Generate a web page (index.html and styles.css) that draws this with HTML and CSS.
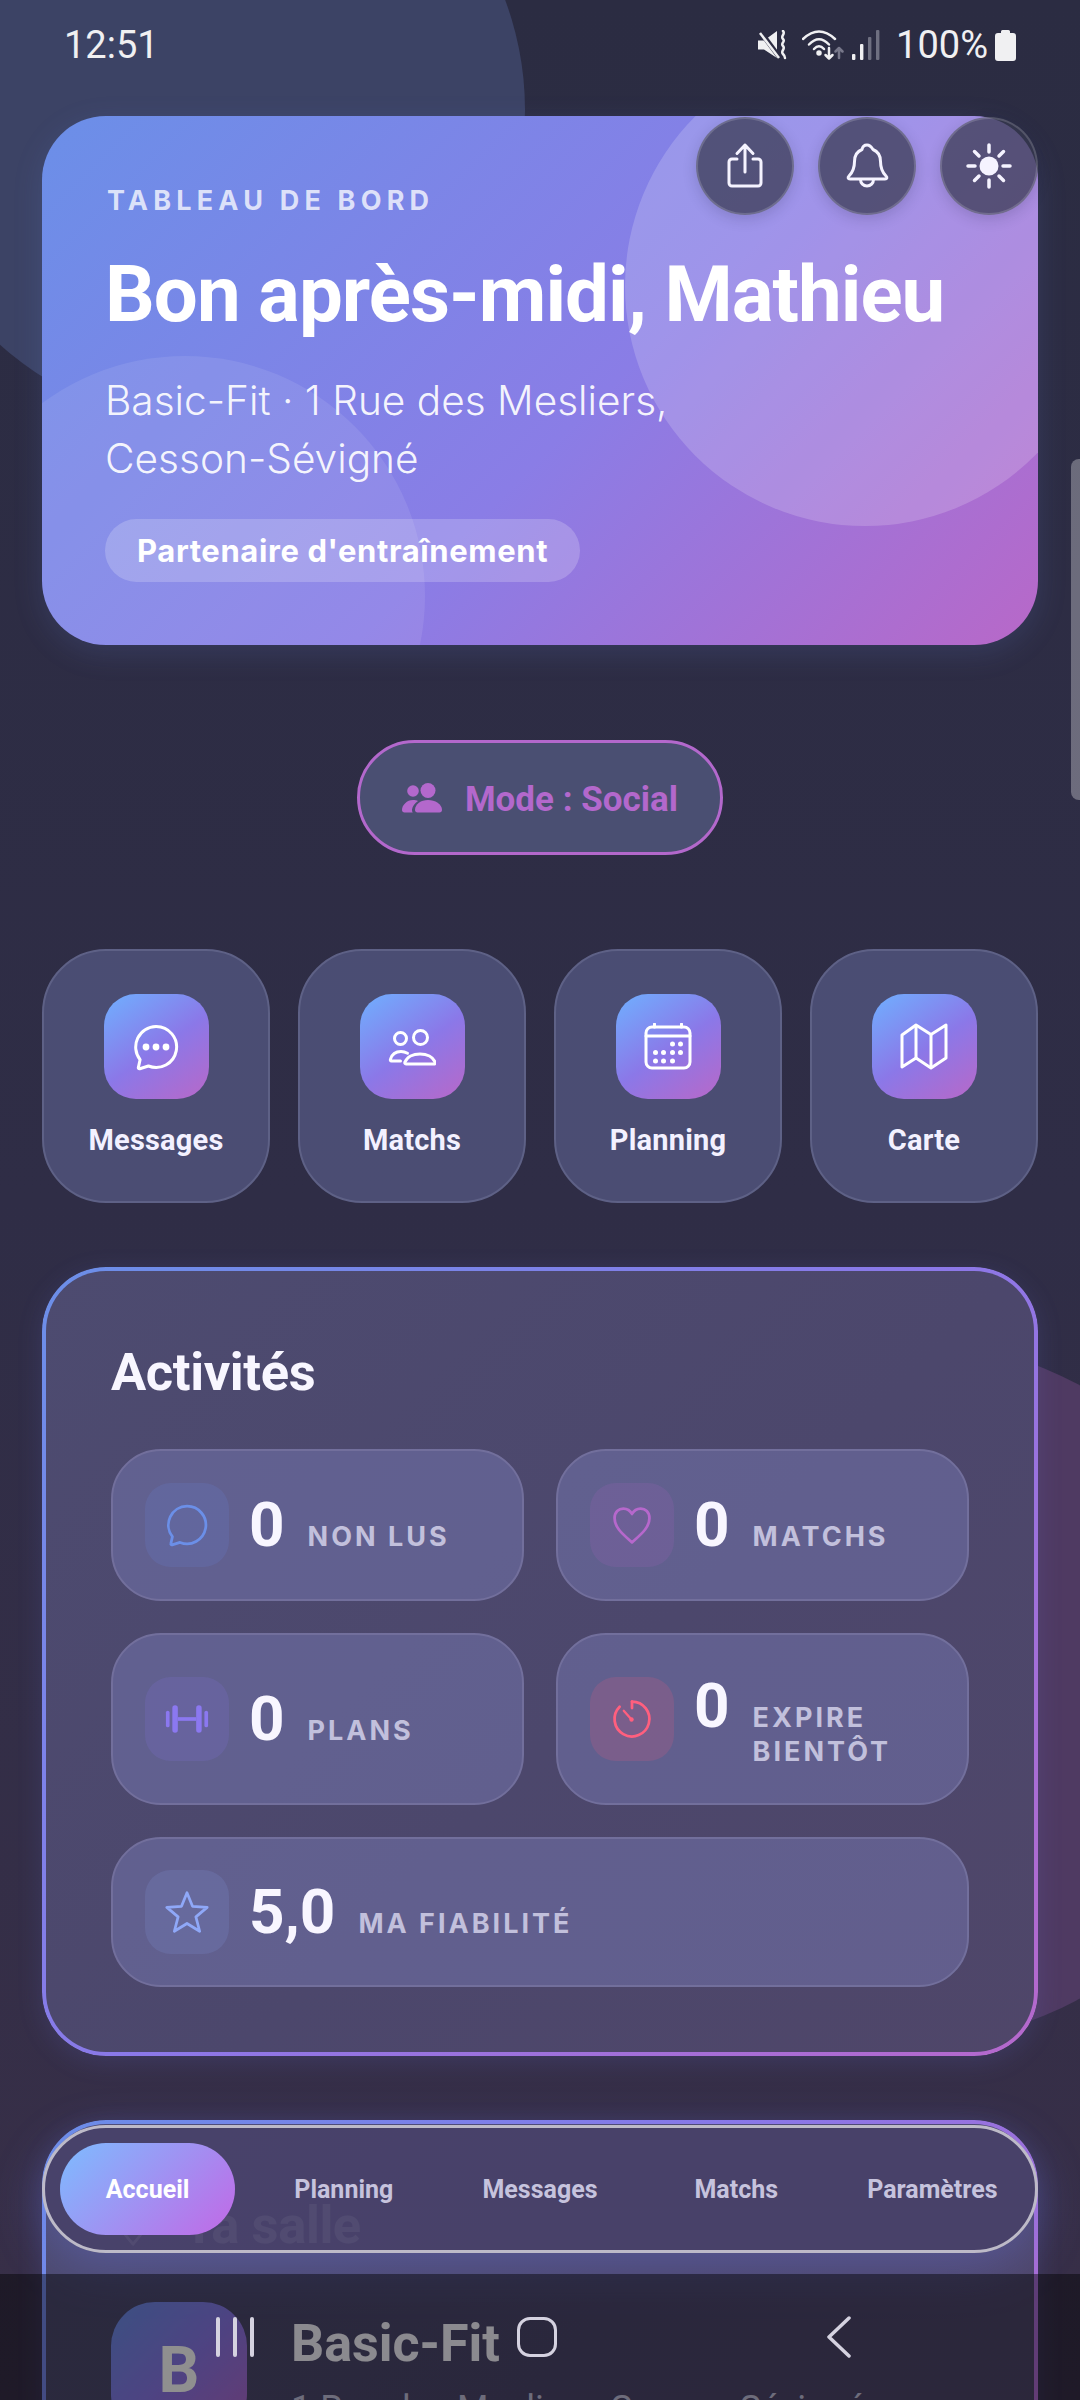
FILE: index.html
```html
<!DOCTYPE html>
<html lang="fr">
<head>
  <meta charset="utf-8">
  <title>Tableau de bord</title>
  <link rel="stylesheet" href="styles.css">
</head>
<body>
  <div class="screen">
    <div class="blob blob-top"></div>
    <div class="blob blob-bottom"></div>

    <div class="page">
      <div class="status">
        <span class="time">12:51</span>
        <div class="status-right">
          <svg class="ic-mute" viewBox="0 0 30 30"><path d="M0 10.500h6L19 1v27L6 19.500H0z" fill="#f0f0f2"/><path d="M2 1l20 27" stroke="#2c2c42" stroke-width="5"/><path d="M2 3l19 25" stroke="#f0f0f2" stroke-width="2.500"/><path d="M25 1c3 3-3 5 0 8s-3 4 0 7-3 5 0 8c1 1 2 3 2 4" fill="none" stroke="#f0f0f2" stroke-width="2.500" stroke-linecap="round"/></svg>
          <svg class="ic-wifi" viewBox="0 0 42 32" fill="none" stroke="#f0f0f2" stroke-width="2.500" stroke-linecap="round" stroke-linejoin="round"><path d="M1 10Q17-5 33 10"/><path d="M7 15.500Q17 5 27 15.500"/><path d="M12 20Q17 14.500 22 20"/><circle cx="17" cy="24" r="1.500" fill="#f0f0f2"/><path d="M27 19v10M23.500 26l3.500 3.500 3.500-3.500"/><path d="M37 29V19M33.500 22.500l3.500-3.500 3.500 3.500" stroke="#77778a"/></svg>
          <svg class="ic-signal" viewBox="0 0 28 30"><rect x="0" y="24" width="3.400" height="6" rx="1" fill="#f0f0f2"/><rect x="8" y="14" width="3.400" height="16" rx="1" fill="#f0f0f2"/><rect x="16" y="7" width="3.400" height="23" rx="1" fill="#6e6f80"/><rect x="24" y="0" width="3.400" height="30" rx="1" fill="#6e6f80"/></svg>
          <span class="percent">100%</span>
          <svg class="ic-battery" viewBox="0 0 21 32"><path d="M6 2.500a1.500 1.500 0 0 1 1.500-1.500h6a1.500 1.500 0 0 1 1.500 1.500V4h3a3 3 0 0 1 3 3v22a3 3 0 0 1-3 3H3a3 3 0 0 1-3-3V7a3 3 0 0 1 3-3h3z" fill="#f0f0f2"/></svg>
        </div>
      </div>

      <section class="hero">
        <div class="hero-bg"><span class="hero-circle circle-a"></span><span class="hero-circle circle-b"></span></div>
        <div class="hero-actions">
          <button class="round-btn">
            <svg viewBox="0 0 48 48" fill="none" stroke="#f5f3ff" stroke-width="3" stroke-linecap="round" stroke-linejoin="round"><path d="M24 30V3M16 11.500L24 3l8 8.500"/><path d="M16 17h-5a3 3 0 0 0-3 3v21a3 3 0 0 0 3 3h26a3 3 0 0 0 3-3V20a3 3 0 0 0-3-3h-5"/></svg>
          </button>
          <button class="round-btn">
            <svg viewBox="0 0 48 48" fill="none" stroke="#f5f3ff" stroke-width="3" stroke-linecap="round" stroke-linejoin="round"><path d="M24 3c-3 0-4.500 2-5 4.500-5 2-7.500 6.500-7.500 12 0 7-2 11-5.500 14.500-1.500 1.500-1 3 1 3h35c2 0 2.500-1.500 1-3-3.500-3.500-5.500-7.500-5.500-14.500 0-5.500-2.500-10-7.500-12C28.500 5 27 3 24 3z"/><path d="M17.500 37.500a6.500 6.500 0 0 0 13 0"/></svg>
          </button>
          <button class="round-btn">
            <svg viewBox="0 0 48 48" fill="none" stroke="#f5f3ff" stroke-width="3.500" stroke-linecap="round"><circle cx="24" cy="24" r="9.500" fill="#f5f3ff" stroke="none"/><path d="M24 3v7M24 38v7M3 24h7M38 24h7M9.500 9.500l4.500 4.500M34 34l4.500 4.500M9.500 38.500L14 34M34 14l4.500-4.500"/></svg>
          </button>
        </div>
        <p class="eyebrow">TABLEAU DE BORD</p>
        <h1>Bon après-midi, Mathieu</h1>
        <p class="hero-sub">Basic-Fit · 1 Rue des Mesliers,<br>Cesson-Sévigné</p>
        <span class="hero-pill">Partenaire d'entraînement</span>
      </section>

      <div class="mode-wrap">
        <div class="mode-pill">
          <svg viewBox="0 0 40 30" fill="#b368cc"><circle cx="26" cy="7.500" r="7.500"/><path d="M13 27c0-6 6-10 13-10s14 4 14 10c0 1.500-1 2.500-2.500 2.500h-22C14 29.500 13 28.500 13 27z"/><circle cx="11" cy="8" r="5.800"/><path d="M0 27c0-5 5-10 11-10 2 0 3.500.4 5 1-3 2-5.500 5-6 8.500 0 1.500.2 2.200.8 3H2.500C1 29.500 0 28.500 0 27z"/></svg>
          <span class="mode-text">Mode : Social</span>
        </div>
      </div>

      <div class="shortcuts">
        <a class="shortcut">
          <span class="shortcut-icon">
            <svg viewBox="0 0 48 48" fill="none" stroke="#fff" stroke-width="3" stroke-linejoin="round"><path d="M24 3.500a20.500 20.500 0 1 1-7.600 39.500l-8.600 2.700c-1 .3-1.700-.5-1.400-1.400l1.700-7.600A20.500 20.500 0 0 1 24 3.500z"/><circle cx="14" cy="24" r="3.400" fill="#fff" stroke="none"/><circle cx="24" cy="24" r="3.400" fill="#fff" stroke="none"/><circle cx="34" cy="24" r="3.400" fill="#fff" stroke="none"/></svg>
          </span>
          <span class="shortcut-label">Messages</span>
        </a>
        <a class="shortcut">
          <span class="shortcut-icon">
            <svg viewBox="0 0 48 48" fill="none" stroke="#fff" stroke-width="3" stroke-linejoin="round" stroke-linecap="round"><circle cx="32.500" cy="14.500" r="7"/><path d="M18 41h28c1 0 1.500-1 1-2-2-5-8-8-15-8s-13 3-15 8c-.5 1 0 2 1 2z"/><circle cx="12.500" cy="15.500" r="6"/><path d="M12.500 38H3.500c-1 0-1.500-.8-1-1.800C4 31 8 28.500 13 28.500c2.500 0 4.500.6 6.500 1.700"/></svg>
          </span>
          <span class="shortcut-label">Matchs</span>
        </a>
        <a class="shortcut">
          <span class="shortcut-icon">
            <svg viewBox="0 0 48 48" fill="none" stroke="#fff" stroke-width="3" stroke-linecap="round"><rect x="2" y="4" width="44" height="41" rx="6"/><path d="M2 13h44M10.500 1v3M37.500 1v3"/><g fill="#fff" stroke="none"><circle cx="28.500" cy="21" r="2.500"/><circle cx="36.500" cy="21" r="2.500"/><circle cx="11.500" cy="29.500" r="2.500"/><circle cx="19.500" cy="29.500" r="2.500"/><circle cx="28.500" cy="29.500" r="2.500"/><circle cx="36.500" cy="29.500" r="2.500"/><circle cx="11.500" cy="38" r="2.500"/><circle cx="19.500" cy="38" r="2.500"/><circle cx="28.500" cy="38" r="2.500"/></g></svg>
          </span>
          <span class="shortcut-label">Planning</span>
        </a>
        <a class="shortcut">
          <span class="shortcut-icon">
            <svg viewBox="0 0 48 48" fill="none" stroke="#fff" stroke-width="3" stroke-linejoin="round"><path d="M2 12L16 2l15 9.500L46 2v33L31 45 16 35 2 44z"/><path d="M16 2v33M31 11.500V45"/></svg>
          </span>
          <span class="shortcut-label">Carte</span>
        </a>
      </div>

      <section class="card">
        <h2>Activités</h2>
        <div class="stats">
          <div class="stat">
            <span class="stat-icon tint-blue">
              <svg viewBox="0 0 48 48" fill="none" stroke="#6b8fe8" stroke-width="3" stroke-linejoin="round"><path d="M24 3.500a20.500 20.500 0 1 1-7.600 39.500l-8.600 2.700c-1 .3-1.700-.5-1.400-1.400l1.700-7.600A20.500 20.500 0 0 1 24 3.500z"/></svg>
            </span>
            <div class="stat-text"><span class="stat-num">0</span><span class="stat-label">NON LUS</span></div>
          </div>
          <div class="stat">
            <span class="stat-icon tint-purple">
              <svg viewBox="0 0 48 48" fill="none" stroke="#b668cc" stroke-width="3" stroke-linejoin="round"><path d="M24 43C14 34 5 27 5 16.500 5 10 9.500 6 14.500 6c4 0 7.500 2 9.500 6 2-4 5.500-6 9.500-6C38.500 6 43 10 43 16.500 43 27 34 34 24 43z"/></svg>
            </span>
            <div class="stat-text"><span class="stat-num">0</span><span class="stat-label">MATCHS</span></div>
          </div>
          <div class="stat">
            <span class="stat-icon tint-violet">
              <svg viewBox="0 0 48 48" fill="#8b78f0"><rect x="1" y="15" width="4" height="18" rx="2"/><rect x="8" y="9" width="6" height="30" rx="3"/><rect x="14" y="22" width="20" height="4"/><rect x="34" y="9" width="6" height="30" rx="3"/><rect x="43" y="15" width="4" height="18" rx="2"/></svg>
            </span>
            <div class="stat-text"><span class="stat-num">0</span><span class="stat-label">PLANS</span></div>
          </div>
          <div class="stat stat-tall">
            <span class="stat-icon tint-pink">
              <svg viewBox="0 0 48 48" fill="none" stroke="#ff5f7e" stroke-width="3" stroke-linecap="round"><path d="M24 5a19 19 0 1 1-13.500 5.600"/><path d="M24 5v7"/><path d="M15 15l8 9" stroke-width="2.500"/><circle cx="23.500" cy="24.500" r="2.400" fill="#ff5f7e" stroke="none"/></svg>
            </span>
            <div class="stat-text"><span class="stat-num">0</span><span class="stat-label">EXPIRE<br>BIENTÔT</span></div>
          </div>
          <div class="stat stat-wide">
            <span class="stat-icon tint-sky">
              <svg viewBox="0 0 48 48" fill="none" stroke="#8fa8f8" stroke-width="3" stroke-linejoin="round"><path d="M24 3l6 14.800 16 1.200-12.300 10.300L37.800 45 24 36.500 10.200 45l4.100-15.700L2 19l16-1.200z"/></svg>
            </span>
            <div class="stat-text"><span class="stat-num">5,0</span><span class="stat-label">MA FIABILITÉ</span></div>
          </div>
        </div>
      </section>

      <section class="card card-gym">
        <h2 class="with-pin">
          <svg viewBox="0 0 48 48" fill="none" stroke="#fff" stroke-width="3" stroke-linejoin="round"><path d="M24 45C14 33 8 26 8 18a16 16 0 0 1 32 0c0 8-6 15-16 27z"/><circle cx="24" cy="18" r="6"/></svg>
          Ta salle
        </h2>
        <div class="gym-row">
          <div class="gym-avatar">B</div>
          <div class="gym-info">
            <div class="gym-name">Basic-Fit</div>
            <div class="gym-address">1 Rue des Mesliers, Cesson-Sévigné</div>
          </div>
        </div>
      </section>
    </div>

    <div class="scrollbar"></div>

    <nav class="tabbar">
      <a class="tab active">Accueil</a>
      <a class="tab">Planning</a>
      <a class="tab">Messages</a>
      <a class="tab">Matchs</a>
      <a class="tab">Paramètres</a>
    </nav>

    <div class="sysnav">
      <span class="sys-item"><span class="sys-bars"><i></i><i></i><i></i></span></span>
      <span class="sys-item"><span class="sys-home"></span></span>
      <span class="sys-item">
        <svg class="sys-back" viewBox="0 0 24 42" fill="none" stroke="#d5d2e0" stroke-width="3.500" stroke-linecap="round" stroke-linejoin="round"><path d="M22 2L2 21l20 19"/></svg>
      </span>
    </div>
  </div>
</body>
</html>
```

FILE: styles.css
```css
* {
  box-sizing: border-box;
}

body {
  margin: 0;
  background: #2c2c42;
  font-family: Roboto, "Liberation Sans", sans-serif;
  color: #f5f3ff;
}

.screen {
  position: relative;
  width: 1080px;
  height: 2400px;
  overflow: hidden;
  background: linear-gradient(180deg, #2b2c42 0%, #2f2d46 50%, #382f48 100%);
}

.blob {
  position: absolute;
  border-radius: 50%;
}

.blob-top {
  left: -105px;
  top: -205px;
  width: 630px;
  height: 630px;
  background: #3c4365;
}

.blob-bottom {
  left: 561px;
  top: 1342px;
  width: 700px;
  height: 700px;
  background: #4f3a62;
}

.page {
  position: relative;
  padding: 0 42px;
}

/* status bar */
.status {
  height: 116px;
  padding: 24px 22px 0 22px;
  display: flex;
  justify-content: space-between;
  align-items: flex-start;
  font-size: 38px;
  line-height: 42px;
  color: #f0f0f2;
}

.status-right {
  display: flex;
  align-items: center;
  height: 42px;
}

.ic-mute {
  width: 30px;
  height: 30px;
  margin-right: 14px;
}

.ic-wifi {
  width: 42px;
  height: 32px;
  margin-right: 8px;
}

.ic-signal {
  width: 28px;
  height: 30px;
  margin-right: 16px;
}

.percent {
  margin-right: 7px;
}

.ic-battery {
  width: 21px;
  height: 32px;
}

/* hero */
.hero {
  position: relative;
  height: 529px;
  padding: 69px 63px 0;
  border-radius: 64px;
  box-shadow: 0 8px 30px rgba(107, 143, 232, 0.15);
}

.hero-bg {
  position: absolute;
  inset: 0;
  overflow: hidden;
  border-radius: 64px;
  background: linear-gradient(135deg, #6b8fe8 0%, #8a7de6 55%, #b868c8 100%);
}

.hero-circle {
  position: absolute;
  width: 480px;
  height: 480px;
  border-radius: 50%;
}

.circle-a {
  left: 583px;
  top: -70px;
  background: rgba(255, 255, 255, 0.18);
}

.circle-b {
  left: -97px;
  top: 240px;
  background: rgba(255, 255, 255, 0.09);
}

.hero > p,
.hero > h1,
.hero > span {
  position: relative;
}

.hero-actions {
  position: absolute;
  top: 1px;
  right: 0;
  display: flex;
  gap: 24px;
}

.round-btn {
  width: 98px;
  height: 98px;
  padding: 0;
  display: flex;
  align-items: center;
  justify-content: center;
  border-radius: 50%;
  border: 2px solid rgba(255, 255, 255, 0.16);
  background: rgba(54, 55, 77, 0.72);
  box-shadow: 0 4px 14px rgba(30, 30, 60, 0.18);
}

.round-btn svg {
  width: 48px;
  height: 48px;
}

.eyebrow {
  margin: 0 0 0 2px;
  font-family: Inter, sans-serif;
  font-size: 27px;
  line-height: 32px;
  font-weight: 700;
  letter-spacing: 5.2px;
  color: rgba(255, 255, 255, 0.76);
}

h1 {
  margin: 36px 0 0;
  font-size: 78px;
  line-height: 84px;
  font-weight: 700;
  letter-spacing: -0.95px;
  color: #fff;
  white-space: nowrap;
}

.hero-sub {
  margin: 35px 0 0;
  font-family: Inter, sans-serif;
  font-size: 40.6px;
  line-height: 58px;
  font-weight: 300;
  color: rgba(255, 255, 255, 0.92);
}

.hero-pill {
  display: inline-block;
  margin-top: 31px;
  padding: 0 32px;
  height: 63px;
  line-height: 63px;
  border-radius: 32px;
  background: rgba(255, 255, 255, 0.2);
  font-family: Inter, sans-serif;
  font-size: 31px;
  font-weight: 700;
  letter-spacing: 0.6px;
  color: #fff;
}

/* mode */
.mode-wrap {
  display: flex;
  justify-content: center;
  margin-top: 95px;
}

.mode-pill {
  width: 366px;
  height: 115px;
  display: flex;
  align-items: center;
  justify-content: center;
  gap: 23px;
  border: 3px solid #b368cc;
  border-radius: 58px;
  background: #4a4f72;
  font-size: 35px;
  font-weight: 700;
  color: #b368cc;
}

.mode-pill svg {
  width: 40px;
  height: 30px;
}

.mode-text {
  padding-top: 3px;
}

/* shortcuts */
.shortcuts {
  display: grid;
  grid-template-columns: repeat(4, 1fr);
  gap: 28px;
  margin-top: 94px;
}

.shortcut {
  height: 254px;
  padding-top: 43px;
  display: flex;
  flex-direction: column;
  align-items: center;
  border: 2px solid #5e6186;
  border-radius: 64px;
  background: rgba(125, 135, 198, 0.36);
}

.shortcut-icon {
  width: 105px;
  height: 105px;
  display: flex;
  align-items: center;
  justify-content: center;
  border-radius: 32px;
  background: linear-gradient(145deg, #6fb0ff 0%, #8b78e8 52%, #b868c8 100%);
}

.shortcut-icon svg {
  width: 48px;
  height: 48px;
}

.shortcut-label {
  margin-top: 24px;
  font-size: 29px;
  line-height: 34px;
  font-weight: 700;
  letter-spacing: 0.2px;
  color: #f3f1ff;
}

/* cards */
.card {
  position: relative;
  margin-top: 64px;
  padding: 75px 69px 69px;
  border-radius: 64px;
  background: linear-gradient(135deg, #4d4b70 0%, #4c476c 55%, #4f4669 100%);
  box-shadow: 0 6px 26px rgba(107, 120, 232, 0.16);
}

.card::before {
  content: "";
  position: absolute;
  inset: 0;
  padding: 4px;
  border-radius: 64px;
  background: linear-gradient(135deg, #6b8fe8 0%, #8b78e8 50%, #b668cc 100%);
  -webkit-mask: linear-gradient(#fff 0 0) content-box, linear-gradient(#fff 0 0);
  -webkit-mask-composite: xor;
  mask-composite: exclude;
}

h2 {
  margin: 0 0 47px;
  font-size: 52.5px;
  line-height: 60px;
  font-weight: 700;
  letter-spacing: -0.4px;
  color: #f8f6ff;
}

.with-pin {
  display: flex;
  align-items: center;
  gap: 28px;
}

.with-pin svg {
  width: 44px;
  height: 44px;
}

.stats {
  display: grid;
  grid-template-columns: 1fr 1fr;
  gap: 32px;
}

.stat {
  display: flex;
  align-items: center;
  gap: 20px;
  padding: 32px 32px;
  border: 2px solid #726f9c;
  border-radius: 50px;
  background: rgba(148, 155, 228, 0.29);
}

.stat-tall {
  padding: 34px 32px;
}

.stat-wide {
  grid-column: span 2;
  padding: 31px 32px;
}

.stat-icon {
  flex: none;
  width: 84px;
  height: 84px;
  display: flex;
  align-items: center;
  justify-content: center;
  border-radius: 26px;
}

.stat-icon svg {
  width: 44px;
  height: 44px;
}

.tint-blue {
  background: rgba(107, 143, 232, 0.15);
}

.tint-purple {
  background: rgba(182, 104, 204, 0.15);
}

.tint-violet {
  background: rgba(139, 120, 240, 0.15);
}

.tint-pink {
  background: rgba(255, 95, 126, 0.16);
}

.tint-sky {
  background: rgba(143, 168, 248, 0.14);
}

.stat-text {
  display: flex;
  align-items: baseline;
  gap: 23px;
}

.stat-num {
  font-size: 62px;
  line-height: 74px;
  font-weight: 700;
  color: #f8f6ff;
}

.stat-label {
  font-family: Inter, sans-serif;
  font-size: 27px;
  line-height: 34px;
  font-weight: 700;
  letter-spacing: 3px;
  color: #c2c0dc;
}

/* gym card */
.gym-row {
  display: flex;
  gap: 44px;
}

.gym-avatar {
  flex: none;
  width: 136px;
  height: 136px;
  display: flex;
  align-items: center;
  justify-content: center;
  border-radius: 44px;
  background: linear-gradient(135deg, #6b8fe8 0%, #8b78e8 50%, #b668cc 100%);
  font-size: 64px;
  font-weight: 700;
  color: #fff;
}

.gym-name {
  margin-top: 11px;
  font-size: 52px;
  line-height: 62px;
  font-weight: 700;
  color: #f8f6ff;
}

.gym-address {
  margin-top: 12px;
  font-size: 36px;
  line-height: 44px;
  color: #c2c0dc;
}

.scrollbar {
  position: absolute;
  top: 459px;
  right: 0;
  width: 9px;
  height: 341px;
  border-radius: 8px 0 0 8px;
  background: rgba(255, 255, 255, 0.3);
}

/* bottom bars */
.tabbar {
  position: absolute;
  left: 42px;
  right: 42px;
  top: 2125px;
  height: 128px;
  padding: 15px;
  display: flex;
  gap: 21px;
  border: 3px solid #bdbac8;
  border-radius: 64px;
  background: rgba(72, 65, 105, 0.95);
  box-shadow: 0 14px 50px rgba(110, 120, 240, 0.32);
}

.tab {
  flex: 1;
  display: flex;
  align-items: center;
  justify-content: center;
  border-radius: 46px;
  font-size: 25px;
  font-weight: 700;
  white-space: nowrap;
  color: #c6c3dd;
}

.tab.active {
  background: linear-gradient(135deg, #7dbcff 0%, #c268e6 100%);
  color: #fff;
}

.sysnav {
  position: absolute;
  left: 0;
  right: 0;
  bottom: 0;
  height: 126px;
  padding-right: 6px;
  display: flex;
  justify-content: center;
  align-items: center;
  background: rgba(0, 0, 0, 0.44);
}

.sys-item {
  width: 302px;
  display: flex;
  justify-content: center;
  align-items: center;
}

.sys-bars {
  display: flex;
  gap: 13px;
}

.sys-bars i {
  width: 4px;
  height: 40px;
  border-radius: 2px;
  background: #d5d2e0;
}

.sys-home {
  width: 40px;
  height: 40px;
  border: 3.5px solid #d5d2e0;
  border-radius: 13px;
}

.sys-back {
  width: 24px;
  height: 42px;
}
```
